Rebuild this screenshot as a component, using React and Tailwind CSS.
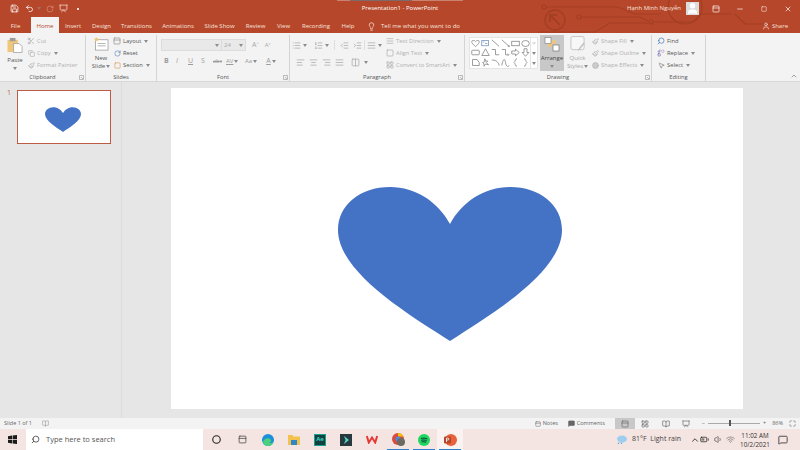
import React from 'react';
import {
  Save, Undo2, RotateCw, Scissors, Copy, Paintbrush, Search, Replace, MousePointer2, User, X, Minus, Square,
  Lightbulb, ChevronUp, MessageSquare, Volume1, Wifi, BatteryMedium, PanelTop,
  List, ListOrdered, IndentDecrease, IndentIncrease, AlignLeft, AlignCenter, AlignRight, AlignJustify, Columns2,
  LayoutGrid, BookOpen, Presentation, Maximize, Circle,
} from 'lucide-react';

const FONT = "font-['Open_Sans','Liberation_Sans',sans-serif]";

const tabs = [
  ['File', 'w-[31px]'],
  ['Home', 'w-[28px]'],
  ['Insert', 'w-[28px]'],
  ['Design', 'w-[29px]'],
  ['Transitions', 'w-[41px]'],
  ['Animations', 'w-[42px]'],
  ['Slide Show', 'w-[41px]'],
  ['Review', 'w-[31px]'],
  ['View', 'w-[25px]'],
  ['Recording', 'w-[40px]'],
  ['Help', 'w-[24px]'],
];

const Caret = ({ className = '' }) => (
  <svg width="4" height="3" viewBox="0 0 4 3" className={`shrink-0 ${className}`}>
    <path d="M0 0h4L2 3z" fill="#8c8c8c" />
  </svg>
);

const Group = ({ width, label, launcher, children }) => (
  <div className={`${width} relative flex h-full shrink-0 flex-col border-r border-[#d4d4d4]`}>
    <div className="flex min-h-0 flex-1">{children}</div>
    <div className="h-[11px] text-center text-[5.800px] leading-[14px] text-[#555]">{label}</div>
    {launcher && (
      <svg width="5" height="5" viewBox="0 0 5 5" className="absolute right-[1px] bottom-[1px]">
        <path d="M.5.5h4v4h-4zM2 2l2 2" fill="none" stroke="#a0a0a0" strokeWidth=".7" />
      </svg>
    )}
  </div>
);

const Row = ({ icon, text, muted, caret }) => (
  <div className={`flex h-[12px] shrink-0 items-center gap-[2px] text-[5.800px] whitespace-nowrap ${muted ? 'text-[#b0b0b0]' : 'text-[#555]'}`}>
    <span className="flex w-[8px] shrink-0 justify-center">{icon}</span>
    <span>{text}</span>
    {caret && <Caret className="ml-[1px]" />}
  </div>
);

const SlideIcon = () => (
  <svg width="16" height="15" viewBox="0 0 16 15">
    <rect x="2" y="3" width="13.5" height="11" fill="#fff" stroke="#8a8a8a" strokeWidth=".7" />
    <path d="M4.500 7h8.500M4.500 9.500h8.500" stroke="#9a9a9a" strokeWidth=".8" />
    <path d="M3 0l.8 1.600 1.700.3-1.200 1.200.3 1.700L3 4l-1.600.8.3-1.700L.5 1.900l1.700-.3z" fill="#f0c36d" />
  </svg>
);

const PasteIcon = () => (
  <svg width="16" height="16" viewBox="0 0 17 17">
    <rect x="0.500" y="3" width="11" height="13" fill="#eec77c" />
    <rect x="3" y="1" width="6" height="3.500" fill="#9c9c9c" />
    <path d="M7 7h6l3 3v6.500H7z" fill="#fff" stroke="#8f8f8f" strokeWidth=".7" />
  </svg>
);

const ArrangeIcon = () => (
  <svg width="16" height="15" viewBox="0 0 16 15">
    <rect x="4" y="6" width="4" height="4" fill="#eec77c" />
    <rect x="8" y="3" width="3.500" height="4" fill="#eec77c" />
    <rect x="1" y=".5" width="6" height="6" fill="#fff" stroke="#777" strokeWidth=".6" />
    <rect x="9" y="8" width="6" height="6" fill="#fff" stroke="#666" strokeWidth=".6" />
  </svg>
);

const QuickStylesIcon = () => (
  <svg width="16" height="17" viewBox="0 0 16 17">
    <rect x=".5" y=".5" width="14" height="14" rx="2" fill="#f7f7f7" stroke="#c4c4c4" />
    <path d="M15 8l-5 6-2 2.500 1-3.500 5-6z" fill="#bdbdbd" />
  </svg>
);

// the shape gallery strokes, three rows of six
const shapes = [
  <path d="M6 10C2 7 1 5 1 3.500 1 1.500 4.500 1 6 3.500 7.500 1 11 1.500 11 3.500 11 5 10 7 6 10z" />,
  <g><rect x="1" y="2" width="9" height="7" stroke="#6f8fbc" /><path d="M2.500 4h2M5.500 6h3" stroke="#6f8fbc" /></g>,
  <path d="M1 1l10 9" />,
  <path d="M1 1l10 9M9 9.500l2 .5-.5-2" />,
  <rect x="1" y="3" width="10" height="6" />,
  <ellipse cx="6" cy="6" rx="5" ry="4" />,
  <rect x="1" y="3" width="10" height="6" rx="1" />,
  <path d="M6 1l5 9H1z" />,
  <path d="M1 2h5v7h5" />,
  <path d="M1 2h5v7h4M9 7.500l1.500 1.500L9 10.500" />,
  <path d="M1 4h5V1.500L11 6 6 10.500V8H1z" />,
  <path d="M4 1h4v5h2.500L6 11 1.500 6H4z" />,
  <path d="M2 2h6l3 4v4H2z" />,
  <path d="M5 1l1 3h3L7 6l3 3-4-1-2 3V8L2 6l3-1z" />,
  <path d="M1 3c4-1 8 1 10 7" />,
  <path d="M1 10c2-10 4-10 5-4s3 6 5 4" />,
  <path d="M8 1C5 1 6 5 4 6c2 1 1 5 4 5" />,
  <path d="M4 1c3 0 2 4 4 5-2 1-1 5-4 5" />,
];

const ShapeGallery = () => (
  <div className="grid h-[32px] w-[62px] grid-cols-6 border border-[#e4e4e4] bg-white py-[1px]">
    {shapes.map((s, i) => (
      <svg key={i} width="9" height="9" viewBox="0 0 12 12" fill="none" stroke="#7d7d7d" strokeWidth="1" className="place-self-center">
        {s}
      </svg>
    ))}
  </div>
);

const Ribbon = () => (
  <div className="flex h-[49px] shrink-0 border-b border-[#d8d8d8] bg-[#f3f3f3] pt-[2px]">
    <Group width="w-[86px]" label="Clipboard" launcher>
      <div className="flex w-[27px] flex-col items-center pt-[2px] pl-[3px] text-[6px] leading-[8px] text-[#555]">
        <PasteIcon />
        <span className="mt-[3px]">Paste</span>
        <Caret className="mt-[3px]" />
      </div>
      <div className="flex flex-col">
        <Row icon={<Scissors size={8} color="#aaa" />} text="Cut" muted />
        <Row icon={<Copy size={7} color="#aaa" />} text="Copy" muted caret />
        <Row icon={<Paintbrush size={7} color="#aaa" />} text="Format Painter" muted />
      </div>
    </Group>
    <Group width="w-[71px]" label="Slides">
      <div className="flex w-[27px] flex-col items-center pt-[2px] pl-[3px] text-[6px] leading-[8px] text-[#555]">
        <SlideIcon />
        <span className="mt-[3px]">New</span>
        <span className="flex items-center gap-[1px]">Slide <Caret /></span>
      </div>
      <div className="flex flex-col">
        <Row icon={<PanelTop size={8} color="#8a8a8a" />} text="Layout" caret />
        <Row icon={<RotateCw size={7} color="#4a7fb5" />} text="Reset" />
        <Row icon={<Square size={7} color="#d9924a" />} text="Section" caret />
      </div>
    </Group>
    <Group width="w-[133px]" label="Font" launcher>
      <div className="flex flex-col pt-[4px] pl-[4px]">
        <div className="flex items-center">
          <div className="flex h-[12px] w-[61px] items-center justify-end border border-[#dcdcdc] bg-[#e9e9e9] pr-[2px]"><Caret /></div>
          <div className="flex h-[12px] w-[24px] items-center justify-between border border-l-0 border-[#dcdcdc] bg-[#e9e9e9] px-[2px] text-[6px] text-[#aaa]">24<Caret /></div>
          <span className="ml-[6px] text-[7px] text-[#a8a8a8]">A<sup className="text-[4px]">^</sup></span>
          <span className="ml-[6px] text-[6px] text-[#a8a8a8]">A<sup className="text-[4px]">v</sup></span>
        </div>
        <div className="mt-[5px] flex items-center text-[7px] text-[#9c9c9c]">
          <span className="ml-[3px] w-[12px] font-bold">B</span>
          <span className="w-[12px] italic">I</span>
          <span className="w-[13px] underline">U</span>
          <span className="w-[12px]">S</span>
          <span className="w-[13px] text-[5.500px] line-through">abc</span>
          <span className="flex w-[19px] items-center gap-[1px] text-[6px] underline">AV<Caret /></span>
          <span className="flex items-center gap-[1px] text-[6px]">Aa<Caret /></span>
          <span className="ml-[9px] flex items-center gap-[1px] underline">A<Caret /></span>
        </div>
      </div>
    </Group>
    <Group width="w-[175px]" label="Paragraph" launcher>
      <div className="flex w-[96px] flex-col gap-[8px] pt-[5px] pl-[2px]">
        <div className="flex items-center">
          <List size={9} color="#aaa" /><Caret className="mr-[7px] ml-[2px]" />
          <ListOrdered size={9} color="#aaa" /><Caret className="mr-[5px] ml-[2px]" />
          <span className="mr-[5px] h-[10px] w-[1px] bg-[#dedede]" />
          <IndentDecrease size={9} color="#aaa" className="mr-[4px]" />
          <IndentIncrease size={9} color="#aaa" className="mr-[2px]" />
          <span className="mr-[2px] h-[10px] w-[1px] bg-[#dedede]" />
          <AlignJustify size={9} color="#aaa" /><Caret className="ml-[2px]" />
        </div>
        <div className="flex items-center gap-[4px]">
          <AlignLeft size={9} color="#aaa" className="ml-[4px]" />
          <AlignCenter size={9} color="#aaa" />
          <AlignRight size={9} color="#aaa" />
          <AlignJustify size={9} color="#aaa" />
          <Columns2 size={9} color="#aaa" className="ml-[3px]" /><Caret />
        </div>
      </div>
      <div className="flex flex-col">
        <Row icon={<AlignJustify size={8} color="#aaa" />} text="Text Direction" muted caret />
        <Row icon={<Square size={8} color="#aaa" />} text="Align Text" muted caret />
        <Row icon={<LayoutGrid size={8} color="#aaa" />} text="Convert to SmartArt" muted caret />
      </div>
    </Group>
    <Group width="w-[187px]" label="Drawing" launcher>
      <div className="flex pt-[2px] pl-[4px]">
        <ShapeGallery />
        <div className="flex h-[32px] w-[7px] flex-col items-center justify-around border border-l-0 border-[#e4e4e4] bg-white">
          <Caret className="opacity-30" />
          <Caret />
          <Caret />
        </div>
      </div>
      <div className="ml-[2px] flex h-[36px] w-[24px] shrink-0 flex-col items-center bg-[#c8c8c8] pt-[2px] text-[6px] leading-[8px] text-[#444]">
        <ArrangeIcon />
        <span className="mt-[2px]">Arrange</span>
        <Caret className="mt-[3px]" />
      </div>
      <div className="flex w-[27px] shrink-0 flex-col items-center pt-[1px] text-[6px] leading-[8px] text-[#a8a8a8]">
        <QuickStylesIcon />
        <span className="mt-[2px]">Quick</span>
        <span className="flex items-center gap-[1px]">Styles <Caret /></span>
      </div>
      <div className="flex flex-col">
        <Row icon={<Paintbrush size={7} color="#aaa" />} text="Shape Fill" muted caret />
        <Row icon={<Paintbrush size={7} color="#aaa" />} text="Shape Outline" muted caret />
        <Row icon={<Circle size={7} color="#aaa" fill="#ccc" />} text="Shape Effects" muted caret />
      </div>
    </Group>
    <Group width="w-[54px]" label="Editing">
      <div className="flex flex-col pl-[5px]">
        <Row icon={<Search size={8} color="#3d6fb4" className="-scale-x-100" />} text="Find" />
        <Row icon={<Replace size={8} color="#7d6bb0" />} text="Replace" caret />
        <Row icon={<MousePointer2 size={7} color="#777" />} text="Select" caret />
      </div>
    </Group>
    <div className="flex flex-1 items-end justify-end pr-[2px] pb-[1px]">
      <ChevronUp size={8} color="#777" />
    </div>
  </div>
);

const Circuit = () => (
  <svg width="270" height="33" viewBox="0 0 270 33" fill="none" stroke="#a33f22" strokeWidth="1.200" className="absolute top-0 left-[530px]">
    <circle cx="25" cy="20" r="10" strokeWidth="1.500" />
    <path d="M30 25l-9-9M20 22v-7h7" strokeWidth="1.800" />
    <circle cx="14" cy="7" r="2" />
    <path d="M16 7h69c7 0 13 5 20 7h26" />
    <circle cx="49" cy="17" r="2" />
    <path d="M51 17h59l8 4" />
    <circle cx="121" cy="22" r="2" />
    <path d="M123 22h40l8-8h30" />
    <path d="M8 32h57l15-9h38" />
    <circle cx="155" cy="7" r="17" />
    <path d="M205 14l10 10h30" />
  </svg>
);

const TitleBar = () => (
  <div className="relative h-[17px] shrink-0">
    <div className="absolute top-0 left-[337px] h-[1px] w-[126px] bg-[#c9826f]" />
    <div className="absolute top-0 left-[350px] h-[1px] w-[62px] bg-[#7d6a6a]" />
    <div className="relative flex h-full items-center text-white">
      <Save size={9} className="ml-[10px]" />
      <Undo2 size={9} className="ml-[6px]" />
      <Caret className="ml-[3px] opacity-60" />
      <RotateCw size={8} className="ml-[5px] opacity-40" />
      <Presentation size={9} className="ml-[5px] opacity-80" />
      <span className="ml-[9px] h-[2px] w-[2px] bg-white opacity-80" />
      <div className="absolute left-[311px] w-[178px] text-center text-[6px]">Presentation1 - PowerPoint</div>
      <div className="ml-auto flex items-center">
        <span className="text-[6px] text-[#f5e4df]">Hạnh Minh Nguyễn</span>
        <span className="ml-[5px] flex h-[13px] w-[13px] items-center justify-center overflow-hidden bg-[#dcdcdc]">
          <User size={13} color="#fff" fill="#fff" />
        </span>
        <PanelTop size={8} className="ml-[13px]" />
        <Minus size={8} className="ml-[16px]" />
        <Square size={6} className="ml-[17px]" />
        <X size={8} className="mr-[8px] ml-[17px]" />
      </div>
    </div>
  </div>
);

const TabBar = () => (
  <div className="relative flex h-[16px] shrink-0 items-center text-[6px] text-[#f6e3de]">
    {tabs.map(([name, w]) => (
      <div
        key={name}
        className={`${w} flex h-[16px] items-center justify-center pt-[2px] ${name === 'Home' ? 'bg-[#f3f3f3] text-[#b7472a]' : ''}`}
      >
        {name}
      </div>
    ))}
    <Lightbulb size={9} className="mt-[2px] ml-[7px]" />
    <span className="mt-[2px] ml-[5px]">Tell me what you want to do</span>
    <span className="mt-[2px] mr-[12px] ml-auto flex items-center gap-[2px]">
      <User size={8} />
      Share
    </span>
  </div>
);

const Heart = ({ className }) => (
  <svg viewBox="0 0 224 154" className={className}>
    <path
      d="M112 37C100 15 78 0 52 0 22 0 0 18 0 43 0 85 70 127 112 154 154 127 224 85 224 43 224 18 202 0 172 0 146 0 124 15 112 37z"
      fill="#4472c4"
    />
  </svg>
);

const Workspace = () => (
  <div className="flex min-h-0 flex-1 bg-[#e6e6e6]">
    <div className="flex w-[122px] shrink-0 border-r border-[#dcdcdc] pt-[8px]">
      <span className="mt-[-2px] w-[17px] pl-[7px] text-[7px] text-[#c9603f]">1</span>
      <div className="flex h-[54px] w-[94px] items-start border-[1.500px] border-[#bd5c42] bg-white">
        <Heart className="mt-[16px] ml-[27px] h-[25px] w-[36px]" />
      </div>
    </div>
    <div className="flex-1 pt-[6px] pl-[49px]">
      <div className="flex h-[321px] w-[572px] items-start bg-white">
        <Heart className="mt-[99px] ml-[167px] h-[154px] w-[224px]" />
      </div>
    </div>
  </div>
);

const StatusBar = () => (
  <div className="flex h-[11px] shrink-0 items-center bg-[#f3f3f3] text-[5.500px] text-[#666]">
    <span className="ml-[4px]">Slide 1 of 1</span>
    <BookOpen size={7} color="#999" className="ml-[10px]" />
    <div className="ml-auto flex items-center">
      <span className="flex items-center gap-[2px]"><PanelTop size={6} />Notes</span>
      <span className="ml-[10px] flex items-center gap-[2px]"><MessageSquare size={7} fill="#666" />Comments</span>
      <span className="ml-[10px] flex h-[11px] w-[20px] items-center justify-center bg-[#c8c8c8]"><PanelTop size={8} /></span>
      <LayoutGrid size={8} className="ml-[6px]" />
      <BookOpen size={8} className="ml-[13px]" />
      <Presentation size={8} className="ml-[12px]" />
      <span className="ml-[12px]">−</span>
      <div className="relative mx-[3px] h-[1px] w-[52px] bg-[#aaa]">
        <div className="absolute top-[-3px] left-[21px] h-[6px] w-[2px] bg-[#555]" />
      </div>
      <span>+</span>
      <span className="ml-[6px]">86%</span>
      <Maximize size={7} className="mr-[4px] ml-[6px]" />
    </div>
  </div>
);

const TaskIcon = ({ children, active, running }) => (
  <div className={`relative flex h-[21px] w-[26px] shrink-0 items-center justify-center ${active ? 'bg-[#fbf3f1]' : ''}`}>
    {children}
    {running && <div className="absolute right-[2px] bottom-0 left-[2px] h-[1px] bg-[#2f7fd0]" />}
  </div>
);

const Taskbar = () => (
  <div className="flex h-[21px] shrink-0 items-center bg-[#f4e5e2] text-[#222]">
    <svg width="9" height="9" viewBox="0 0 9 9" className="ml-[8px]">
      <path d="M0 1.200l4-.6v3.500H0zM4.600.5L9 0v4.100H4.600zM0 4.700h4v3.700l-4-.6zM4.600 4.700H9V9l-4.400-.6z" fill="#1a1a1a" />
    </svg>
    <div className="ml-[9px] flex h-[21px] w-[177px] items-center bg-white">
      <Search size={9} color="#333" className="ml-[5px] -scale-x-100" />
      <span className="ml-[6px] text-[7.500px] text-[#555]">Type here to search</span>
    </div>
    <div className="flex">
      <TaskIcon><Circle size={9} strokeWidth={3} color="#222" /></TaskIcon>
      <TaskIcon><PanelTop size={9} color="#444" /></TaskIcon>
      <TaskIcon>
        <svg width="12" height="12" viewBox="0 0 12 12">
          <circle cx="6" cy="6" r="6" fill="#1b8fd8" />
          <path d="M1 8c1-4 6-5 8-2 .8 1.500-.5 2.500-2 2.500 1.500 1 3.500.5 4.500-1C11 10 9 12 6 12 3.500 12 1.500 10.500 1 8z" fill="#4bd07c" />
        </svg>
      </TaskIcon>
      <TaskIcon>
        <svg width="12" height="11" viewBox="0 0 12 11">
          <path d="M0 1h4.500l1 1.500H12V11H0z" fill="#f2c14e" />
          <rect x="3" y="6" width="6" height="5" fill="#2f87c8" />
        </svg>
      </TaskIcon>
      <TaskIcon>
        <div className="flex h-[12px] w-[12px] items-center justify-center border border-[#1aa08c] bg-[#11423f] text-[6px] font-bold text-[#3ed1bd]">Ae</div>
      </TaskIcon>
      <TaskIcon>
        <svg width="12" height="12" viewBox="0 0 12 12">
          <rect width="12" height="12" fill="#28383f" />
          <path d="M4 2l5 4-5 4 1.500-4z" fill="#4fd6c2" />
        </svg>
      </TaskIcon>
      <TaskIcon>
        <svg width="12" height="9" viewBox="0 0 12 9" fill="none" stroke="#e53935" strokeWidth="2">
          <path d="M.8 1l2 6.500L6 2.500l3.200 5 2-6.500" />
        </svg>
      </TaskIcon>
      <TaskIcon running>
        <svg width="13" height="13" viewBox="0 0 13 13">
          <circle cx="6" cy="6" r="6" fill="#d94b3d" />
          <path d="M6 0a6 6 0 0 1 5.500 3.500H6z" fill="#f4c20d" />
          <circle cx="6" cy="6" r="2.500" fill="#4a8be8" />
          <circle cx="9" cy="9" r="4" fill="#6b6b60" />
        </svg>
      </TaskIcon>
      <TaskIcon running>
        <svg width="12" height="12" viewBox="0 0 12 12">
          <circle cx="6" cy="6" r="6" fill="#1ed760" />
          <path d="M3 4.500c2-.6 4.500-.5 6.300.5M3.300 6.300c1.700-.5 3.800-.4 5.400.5M3.600 8c1.400-.4 3-.3 4.400.4" stroke="#123" strokeWidth=".9" fill="none" />
        </svg>
      </TaskIcon>
      <TaskIcon running active>
        <svg width="13" height="12" viewBox="0 0 13 12">
          <circle cx="7" cy="6" r="6" fill="#e9623d" />
          <rect y="2.500" width="7" height="7" rx="1" fill="#b7472a" />
          <path d="M2.500 8V4h1.300c1.500 0 1.500 2 0 2H2.500" stroke="#fff" strokeWidth=".8" fill="none" />
        </svg>
      </TaskIcon>
    </div>
    <div className="ml-auto flex items-center">
      <svg width="11" height="9" viewBox="0 0 11 9" className="mr-[5px]">
        <ellipse cx="6" cy="4" rx="5" ry="3.500" fill="#9ecdf0" />
        <path d="M3 7.500l-1 1.500M6 7.500l-1 1.500" stroke="#3c9ae0" />
      </svg>
      <span className="text-[7px] text-[#444]">81°F&nbsp; Light rain</span>
      <ChevronUp size={10} className="ml-[9px]" />
      <BatteryMedium size={9} className="ml-0" />
      <Volume1 size={9} color="#555" className="ml-[5px]" />
      <Wifi size={9} color="#777" className="ml-[3px]" />
      <div className="ml-[5px] flex w-[30px] flex-col items-center text-[6.300px] leading-[9px] text-[#333]">
        <span>11:02 AM</span>
        <span>10/2/2021</span>
      </div>
      <MessageSquare size={10} color="#333" className="mr-[12px] ml-[8px]" />
    </div>
  </div>
);

export default function App() {
  return (
    <div className={`flex h-[450px] w-[800px] flex-col overflow-hidden bg-[#b7472a] ${FONT}`}>
      <div className="relative shrink-0">
        <Circuit />
        <TitleBar />
        <TabBar />
      </div>
      <Ribbon />
      <Workspace />
      <StatusBar />
      <Taskbar />
    </div>
  );
}
